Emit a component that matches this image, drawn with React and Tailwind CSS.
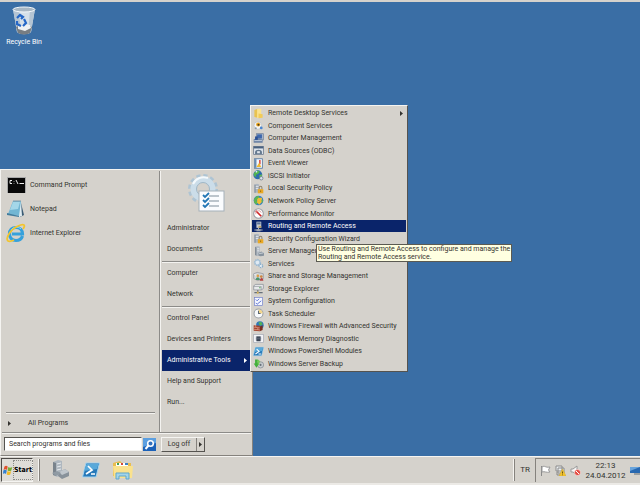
import { useState } from 'react';

function FolderIcon() {
  return (
    <svg viewBox="0 0 16 16" className="size-[11px]">
      <path d="M2 3l5-2v13l-5-1z" fill="#e9c34f" />
      <path d="M6 1h6v12l-6 2z" fill="#fbe38f" />
      <path d="M8 8l6 1v5l-6 1z" fill="#f1cb58" />
    </svg>
  );
}

function ComponentIcon() {
  return (
    <svg viewBox="0 0 16 16" className="size-[11px]">
      <circle cx="7" cy="8" r="5.5" fill="#f4f5f7" stroke="#b9c0c8" />
      <circle cx="7.5" cy="6.5" r="3" fill="#f0aa22" />
      <circle cx="8" cy="7" r="1.5" fill="#4b3a1c" />
      <circle cx="12" cy="11.5" r="2" fill="#4b86cf" />
      <circle cx="4" cy="12" r="1.5" fill="#8a98a6" />
    </svg>
  );
}

function ComputerIcon() {
  return (
    <svg viewBox="0 0 16 16" className="size-[11px]">
      <rect x="5" y="1" width="10" height="9" fill="#a9b8cc" stroke="#6e7f96" />
      <rect x="6" y="2" width="7" height="6" fill="#3e68ad" />
      <path d="M1 9l8-2 5 3v4H1z" fill="#6d84a6" />
      <path d="M3 5h4v5H3z" fill="#294f94" />
      <path d="M2 11h11" stroke="#dfe6ef" />
    </svg>
  );
}

function OdbcIcon() {
  return (
    <svg viewBox="0 0 16 16" className="size-[11px]">
      <rect x="1" y="2" width="14" height="12" fill="#dfe5ec" stroke="#5b6b80" />
      <path d="M1 2h14v3H1z" fill="#48617f" />
      <path d="M3 10c0-4 10-4 10 0v3H3z" fill="#64798f" />
      <path d="M6 9h4v3H6z" fill="#dfe5ec" />
    </svg>
  );
}

function EventIcon() {
  return (
    <svg viewBox="0 0 16 16" className="size-[11px]">
      <rect x="2" y="1" width="12" height="14" fill="#8db2d8" stroke="#5f7c9b" />
      <path d="M5 2h8v12H5z" fill="#f3f6fa" />
      <path d="M10 3v6" stroke="#d3342b" strokeWidth="2" />
      <path d="M5 13l4-6 3 6z" fill="#f0b72e" />
      <path d="M4 2v12" stroke="#45688d" />
    </svg>
  );
}

function GlobeIcon() {
  return (
    <svg viewBox="0 0 16 16" className="size-[11px]">
      <circle cx="7" cy="7" r="6.5" fill="#2c6cae" />
      <path d="M3 3c3-3 6-2 7 0L7 6 4 7l1 3-3-1C0 6 2 4 3 3z" fill="#52b54e" />
      <path d="M9 8l4-2v3l-3 3z" fill="#62bd55" />
      <path d="M4 3l2-1" stroke="#def4fb" strokeWidth="2" />
      <circle cx="12" cy="12" r="2.5" fill="#dbe3ed" stroke="#5d6f83" />
    </svg>
  );
}

function PolicyGlobeIcon() {
  return (
    <svg viewBox="0 0 16 16" className="size-[11px]">
      <circle cx="8" cy="8" r="7" fill="#3382c4" />
      <path d="M3 4c2-3 5-3 6-2L8 6 5 8l2 3-2 3C0 11 1 6 3 4z" fill="#5db552" />
      <path d="M8 4h5v6l-4 4-3-3V6z" fill="#f0bb35" />
      <path d="M12 7l3 1-2 4z" fill="#61b457" />
    </svg>
  );
}

function ServerLockIcon() {
  return (
    <svg viewBox="0 0 16 16" className="size-[11px]">
      <path d="M2 2l4-1 3 1v12H2z" fill="#adb6c0" />
      <path d="M2 2l2 1v11H2z" fill="#8d98a4" />
      <path d="M4 5h4M4 8h4" stroke="#f2f4f6" />
      <path d="M9 9V7c0-3 4-3 4 0v2" fill="none" stroke="#8d8470" strokeWidth="1.5" />
      <rect x="7" y="9" width="8" height="6" fill="#e9a824" />
      <path d="M11 11v2" stroke="#9d7219" strokeWidth="1.5" />
    </svg>
  );
}

function ServerIcon() {
  return (
    <svg viewBox="0 0 16 16" className="size-[11px]">
      <path d="M3 1l4-1 3 1v12l-4 2-3-2z" fill="#b3bbc4" />
      <path d="M3 1l2 1v12l-2-1z" fill="#7f8993" />
      <path d="M6 4h3M6 7h3" stroke="#f7f9fa" />
      <path d="M8 10l4-2 4 2v4l-5 1-3-1z" fill="#88939e" />
      <path d="M9 11l6-1" stroke="#e8ecf0" />
    </svg>
  );
}

function PerformanceIcon() {
  return (
    <svg viewBox="0 0 16 16" className="size-[11px]">
      <circle cx="8" cy="8" r="7" fill="#fff" stroke="#989ca2" strokeWidth="1.5" />
      <path d="M4 4l8 8" stroke="#cf2a2a" strokeWidth="2.5" />
      <path d="M4 9a4 4 0 0 1 8-2" fill="none" stroke="#cf8e8e" />
    </svg>
  );
}

function RoutingIcon() {
  return (
    <svg viewBox="0 0 16 16" className="size-[11px]">
      <path d="M5 1h7v9H5z" fill="#c7ccd4" />
      <path d="M6 2h5v3H6z" fill="#5b7297" />
      <path d="M8 7h4v3H8z" fill="#b9a06a" />
      <path d="M2 13h12M8 10v4" stroke="#aab0ba" strokeWidth="1.5" />
      <path d="M5 12h6v3H5z" fill="#9ba5b2" />
    </svg>
  );
}

function GearIcon() {
  return (
    <svg viewBox="0 0 16 16" className="size-[11px]">
      <circle cx="6.5" cy="6.5" r="4" fill="#dfeaf3" stroke="#9cb9d1" strokeWidth="2.5" strokeDasharray="2 1" />
      <circle cx="6.5" cy="6.5" r="3.5" fill="none" stroke="#a7c4da" />
      <circle cx="11.5" cy="11.5" r="2.5" fill="#e4edf5" stroke="#8aaeca" strokeWidth="2" strokeDasharray="2 1" />
    </svg>
  );
}

function ShareIcon() {
  return (
    <svg viewBox="0 0 16 16" className="size-[11px]">
      <path d="M1 4l5-2 9 2v7l-8 3-6-3z" fill="#d2d5d7" stroke="#8d9297" />
      <path d="M2 5l5 2v6" fill="none" stroke="#fff" />
      <circle cx="7" cy="7" r="2" fill="#dc9d45" />
      <circle cx="12" cy="8" r="2" fill="#cc8640" />
      <path d="M4 13c0-5 6-5 6 0z" fill="#4d956d" />
      <path d="M10 14c0-5 5-5 5 0z" fill="#b44141" />
    </svg>
  );
}

function StorageIcon() {
  return (
    <svg viewBox="0 0 16 16" className="size-[11px]">
      <path d="M1 4l3-2h11v6l-3 2H1z" fill="#e7e9eb" stroke="#858b91" />
      <path d="M1 5h11v5" fill="none" stroke="#8f969c" />
      <path d="M7 10v4M2 14h12" stroke="#666f78" strokeWidth="1.5" />
      <path d="M9 7h2" stroke="#43a343" strokeWidth="1.5" />
      <circle cx="7" cy="14" r="1.5" fill="#d8b355" />
    </svg>
  );
}

function ConfigIcon() {
  return (
    <svg viewBox="0 0 16 16" className="size-[11px]">
      <rect x="2" y="2" width="12" height="12" fill="#f2f5ff" stroke="#7280c8" strokeWidth="1" />
      <path d="M4 5l2 2 3-3M4 10l2 2 6-5" fill="none" stroke="#4a62cc" strokeWidth="1.2" />
    </svg>
  );
}

function ClockIcon() {
  return (
    <svg viewBox="0 0 16 16" className="size-[11px]">
      <circle cx="8" cy="8" r="6.5" fill="#f8fafc" stroke="#999fa6" strokeWidth="1.5" />
      <path d="M8 8V2a6 6 0 0 1 6 6z" fill="#f3d68b" />
      <path d="M8 4v4h3" fill="none" stroke="#5c6875" strokeWidth="1.5" />
    </svg>
  );
}

function FirewallIcon() {
  return (
    <svg viewBox="0 0 16 16" className="size-[11px]">
      <circle cx="10" cy="6" r="5.5" fill="#2f77b8" />
      <path d="M8 2l4-1 2 4-4 2z" fill="#54b257" />
      <path d="M1 6l9 1v8l-9-1z" fill="#a3432c" />
      <path d="M1 9l9 1M1 12l9 1M4 6v3M7 10v3" stroke="#e0a290" />
      <path d="M10 8l4-2v7l-4 2z" fill="#7c2d1e" />
    </svg>
  );
}

function MemoryIcon() {
  return (
    <svg viewBox="0 0 16 16" className="size-[11px]">
      <rect x="1" y="2" width="14" height="12" fill="#f4f5f8" stroke="#a3a8b2" />
      <path d="M5 5h6v7H5z" fill="#26303f" />
      <path d="M4 6h8M4 8h8M4 10h8" stroke="#6a7588" />
    </svg>
  );
}

function PowerShellIcon({ className = 'size-[11px]' }) {
  return (
    <svg viewBox="0 0 18 16" className={className}>
      <path d="M4 1h13.500l-3.500 14H.5z" fill="#2779b9" stroke="#a5d4ef" />
      <path d="M4.500 2h12l-1.500 5-13 2z" fill="#58a9da" />
      <path d="M6 4l4 4-6 4M9 12h4" fill="none" stroke="#fff" strokeWidth="1.700" />
    </svg>
  );
}

function BackupIcon() {
  return (
    <svg viewBox="0 0 16 16" className="size-[11px]">
      <circle cx="11" cy="10" r="4.500" fill="#c7ccd0" stroke="#7e868e" />
      <circle cx="11" cy="10" r="1.500" fill="#68727a" />
      <path d="M3 2h4v6h2l-4 6-4-6h2z" fill="#43af3d" />
      <path d="M8 2l3 4H9v4H7V6H5z" fill="#75cb59" />
    </svg>
  );
}

const adminTools = [
  { label: 'Remote Desktop Services', icon: FolderIcon, hasMenu: true },
  { label: 'Component Services', icon: ComponentIcon },
  { label: 'Computer Management', icon: ComputerIcon },
  { label: 'Data Sources (ODBC)', icon: OdbcIcon },
  { label: 'Event Viewer', icon: EventIcon },
  { label: 'iSCSI Initiator', icon: GlobeIcon },
  { label: 'Local Security Policy', icon: ServerLockIcon },
  { label: 'Network Policy Server', icon: PolicyGlobeIcon },
  { label: 'Performance Monitor', icon: PerformanceIcon },
  { label: 'Routing and Remote Access', icon: RoutingIcon },
  { label: 'Security Configuration Wizard', icon: ServerLockIcon },
  { label: 'Server Manager', icon: ServerIcon },
  { label: 'Services', icon: GearIcon },
  { label: 'Share and Storage Management', icon: ShareIcon },
  { label: 'Storage Explorer', icon: StorageIcon },
  { label: 'System Configuration', icon: ConfigIcon },
  { label: 'Task Scheduler', icon: ClockIcon },
  { label: 'Windows Firewall with Advanced Security', icon: FirewallIcon },
  { label: 'Windows Memory Diagnostic', icon: MemoryIcon },
  { label: 'Windows PowerShell Modules', icon: PowerShellIcon },
  { label: 'Windows Server Backup', icon: BackupIcon },
];

const places = [
  ['Administrator', 'Documents'],
  ['Computer', 'Network'],
  ['Control Panel', 'Devices and Printers', 'Administrative Tools', 'Help and Support', 'Run...'],
];

function Arrow() {
  return (
    <svg viewBox="0 0 3 5" className="h-[5px] w-[3px] shrink-0">
      <path d="M0 0l3 2.500L0 5z" fill="currentColor" />
    </svg>
  );
}

function Separator({ className = '' }) {
  return <div className={`h-[2px] shrink-0 border-t border-b border-t-[#8c8b88] border-b-[#f4f3f0] ${className}`} />;
}

function RecycleBin() {
  return (
    <button className="ml-1 mt-1 flex w-10 flex-col items-center text-white">
      <svg viewBox="0 0 24 30" className="h-[30px] w-6">
        <path d="M1 3l4 23c3 3 11 3 14 0l4-23z" fill="#d5e0e9" />
        <path d="M1 3l4 23 4 2L7 4zM23 3l-4 23-3 2 2-24z" fill="#b4c4d3" />
        <path d="M4 21l2 6c4 2 8 2 12 0l2-6c-4-2-11-2-16 0z" fill="#777d82" />
        <path d="M6 20l5-2 7 1 1 3-6 3-7-2z" fill="#eef1f3" />
        <ellipse cx="12" cy="3.500" rx="11" ry="2.500" fill="#a8b7c4" stroke="#f4f8fb" />
        <path d="M5 12l3-3 3 2-2 2M12 13l2 4-3 3M9 20l-4-2v-3" fill="none" stroke="#2567c7" strokeWidth="2.200" />
      </svg>
      <span className="mt-px leading-[10px] whitespace-nowrap">Recycle Bin</span>
    </button>
  );
}

function CommandIcon() {
  return (
    <svg viewBox="0 0 19 16" className="h-4 w-[19px]">
      <rect width="19" height="16" fill="#080808" />
      <path d="M0 .5h19M.5 0v16M18.500 0v16" stroke="#a9a9a9" />
      <path d="M5 3.500H3v3h2M7 4v.5M7 6v.5M9 3l2 4M12.500 6.500H17" fill="none" stroke="#eee" />
    </svg>
  );
}

function NotepadIcon() {
  return (
    <svg viewBox="0 0 20 18" className="h-[18px] w-5">
      <path d="M15 3l3 12-4 2z" fill="#3b5c74" />
      <path d="M7 1l8 1 1 14-3 1z" fill="#dfebf0" />
      <path d="M7 1h8l-2 15-11-2z" fill="#72b6d3" />
      <path d="M7 2h7l-2 7-8 1z" fill="#a4d7e9" />
      <path d="M1 13l12 3v1L1 15z" fill="#427c9c" />
      <path d="M7 1h8" stroke="#7f9aaa" />
    </svg>
  );
}

function ExplorerIcon() {
  return (
    <svg viewBox="0 0 20 20" className="size-5">
      <path d="M16.500 13c-1 3-3 4.500-6.500 4.500-4 0-6.500-3-6.500-6.700S6 4.500 10 4.500s6.500 3 6.500 6.500H6" fill="none" stroke="#36a1dc" strokeWidth="3.200" />
      <path d="M5 7c2-3 7-4 10-1" fill="none" stroke="#93dbf7" />
      <path d="M2 18C-1 15 5 6 12 3c6-3 8-1 5 3M2 18c2 1 4 0 6-1" fill="none" stroke="#f3c52c" strokeWidth="1.800" />
    </svg>
  );
}

function ChecklistGear() {
  return (
    <svg viewBox="0 0 38 39" className="h-[39px] w-[38px]">
      <circle cx="16" cy="16" r="13" fill="none" stroke="#aec4d3" strokeWidth="4" strokeDasharray="4 2.800" />
      <circle cx="16" cy="16" r="9.500" fill="none" stroke="#cbdde9" strokeWidth="6" />
      <circle cx="16" cy="16" r="6.500" fill="none" stroke="#9fb7c7" />
      <path d="M6 11c3-6 9-8 15-6" fill="none" stroke="#f4f9fc" strokeWidth="2" />
      <rect x="12" y="18" width="25" height="20" fill="#fafcfe" stroke="#a6b1ba" />
      <path d="M22 23h10M22 28h10M22 33h10" stroke="#7f8e99" strokeWidth="1.200" />
      <path d="M16 22l2 2 4-4M16 27l2 2 4-4M16 32l2 2 4-4" fill="none" stroke="#2377b5" strokeWidth="1.800" />
    </svg>
  );
}

function AdminToolsMenu({ selected, onSelect }) {
  return (
    <ul className="absolute bottom-[84px] left-[250px] z-10 flex h-[267px] w-[158px] flex-col border border-t-[#f5f4f1] border-r-[#55534f] border-b-[#55534f] border-l-[#f5f4f1] bg-[#d5d2cc] p-px">
      {adminTools.map(({ label, icon: Icon, hasMenu }) => (
        <li key={label} className="relative flex min-h-0 flex-1">
          <button
            onClick={() => onSelect(label)}
            className={`flex flex-1 items-center pr-[3px] pl-px text-left leading-[10px] whitespace-nowrap ${
              selected === label ? 'bg-[#0a246a] text-white' : ''
            }`}
          >
            <Icon />
            <span className="ml-1 flex-1">{label}</span>
            {hasMenu && <Arrow />}
          </button>
          {selected === label && (
            <div
              role="tooltip"
              className="absolute top-6 left-16 z-20 border border-[#5b5a52] bg-[#ffffe1] px-px leading-[8px] whitespace-nowrap text-[#33322d]"
            >
              Use Routing and Remote Access to configure and manage the
              <br />
              Routing and Remote Access service.
            </div>
          )}
        </li>
      ))}
    </ul>
  );
}

function StartMenu() {
  const [search, setSearch] = useState('');

  return (
    <div className="absolute bottom-0 left-0 flex h-[287px] w-[253px] flex-col border border-t-[#f5f4f1] border-r-[#85827d] border-b-[#85827d] border-l-[#f5f4f1] bg-[#d5d2cc] p-px">
      <div className="flex min-h-0 flex-1">
        <div className="flex w-[157px] flex-col px-1 pt-[2px]">
          <button className="flex h-6 items-center gap-1">
            <span className="flex w-5 justify-center"><CommandIcon /></span>
            Command Prompt
          </button>
          <button className="flex h-6 items-center gap-1">
            <NotepadIcon />
            Notepad
          </button>
          <button className="flex h-6 items-center gap-1">
            <ExplorerIcon />
            Internet Explorer
          </button>
          <Separator className="mt-auto" />
          <button className="flex h-[18px] items-center pl-[2px]">
            <Arrow />
            <span className="ml-[17px]">All Programs</span>
          </button>
        </div>
        <div className="w-[2px] border-r border-l border-r-[#f4f3f0] border-l-[#8c8b88]" />
        <div className="flex flex-1 flex-col px-px">
          <div className="flex h-[47px] shrink-0 justify-center pt-[2px]">
            <ChecklistGear />
          </div>
          {places.map((group, i) => (
            <div key={group[0]}>
              {i > 0 && <Separator className="mt-px" />}
              {group.map((name) => (
                <button
                  key={name}
                  className={`flex h-[21px] w-full items-center justify-between pr-[3px] pl-[5px] ${
                    name === 'Administrative Tools' ? 'bg-[#0a246a] text-white' : ''
                  }`}
                >
                  {name}
                  {name === 'Administrative Tools' && <Arrow />}
                </button>
              ))}
            </div>
          ))}
        </div>
      </div>
      <Separator />
      <div className="flex h-[20px] shrink-0 items-center pl-[2px]">
        <input
          type="text"
          aria-label="Search programs and files"
          placeholder="Search programs and files"
          value={search}
          onChange={(e) => setSearch(e.target.value)}
          className="h-[14px] w-[138px] border border-t-[#55534f] border-r-[#f4f3f0] border-b-[#f4f3f0] border-l-[#55534f] bg-white px-1 placeholder:text-[#33322f]"
        />
        <button aria-label="Search" className="ml-px">
          <svg viewBox="0 0 13 13" className="size-[13px]">
            <rect width="13" height="13" fill="#1b61b8" />
            <path d="M0 0h13v5L0 9z" fill="#5c9fe0" />
            <circle cx="7.500" cy="5.500" r="2.800" fill="#3270bd" stroke="#fff" strokeWidth="1.500" />
            <path d="M5.500 7.500L2.500 11" stroke="#fff" strokeWidth="2" />
          </svg>
        </button>
        <div className="ml-[5px] flex h-[15px] border border-t-[#f5f4f1] border-r-[#55534f] border-b-[#55534f] border-l-[#f5f4f1]">
          <button className="w-[34px]">Log off</button>
          <button aria-label="More" className="flex w-2 items-center justify-center border-l border-l-[#85827d]">
            <Arrow />
          </button>
        </div>
      </div>
    </div>
  );
}

function Taskbar() {
  return (
    <footer className="flex h-[29px] shrink-0 items-center border-t border-t-[#f5f4f1] border-b-2 border-b-[#eceae6] bg-[#d5d2cc]">
      <button className="ml-px flex h-6 w-8 items-center border border-t-[#4d4b48] border-r-[#f5f4f1] border-b-[#f5f4f1] border-l-[#4d4b48] bg-[#dfddd8]">
        <svg viewBox="0 0 10 10" className="ml-px size-[10px] shrink-0">
          <path d="M1.500 1.500c1-1 2-1 3.200 0L4 5C3 4 2 4 .5 5z" fill="#e1512c" />
          <path d="M5.300 2c1.200 1 2.500 1 4 0l-1 3.500c-1 .8-2.500.8-3.700 0z" fill="#78ae34" />
          <path d="M.3 5.500c1-1 2.500-1 3.500 0L3 9c-1-1-2-1-3 0z" fill="#3480d0" />
          <path d="M4.500 6c1 1 2.500 1 3.700 0l-1 3.500c-1 .8-2.500.8-3.500 0z" fill="#f3ba24" />
        </svg>
        <span className="flex h-5 items-center border border-dotted border-[#8c8b88] font-['DejaVu_Sans_Condensed','DejaVu_Sans',sans-serif] font-bold text-black">
          Start
        </span>
      </button>
      <div className="ml-[5px] h-[22px] w-[2px] border-r border-l border-r-[#85827d] border-l-[#f5f4f1]" />
      <div className="flex items-center gap-3 pl-[10px]">
        <button aria-label="Server Manager" className="flex w-5 justify-center">
          <svg viewBox="0 0 20 20" className="size-5">
            <path d="M3 2l5-2 4 1v13l-5 3-4-2z" fill="#aeb7bf" />
            <path d="M3 2l3 1v13l-3-1z" fill="#79838c" />
            <path d="M7 4l4-1M7 7l4-1M7 10l4-1" stroke="#e7ebee" />
            <path d="M9 12l6-3 4 3v4l-7 3-4-3z" fill="#87919a" />
            <path d="M9 12l6-3 4 3-7 3z" fill="#bfc6cc" />
            <path d="M2 13l5-2 4 2-5 3z" fill="#8f9aa3" />
          </svg>
        </button>
        <button aria-label="Windows PowerShell"><PowerShellIcon className="h-4 w-[18px]" /></button>
        <button aria-label="Windows Explorer">
          <svg viewBox="0 0 22 20" className="h-5 w-[22px]">
            <path d="M1 3l7-2 2 2h9v13H1z" fill="#e9bd50" />
            <path d="M4 3h12v3H4z" fill="#fff" />
            <path d="M5 4h2" stroke="#3f9d58" strokeWidth="2" />
            <path d="M9 4h2" stroke="#d34a38" strokeWidth="2" />
            <path d="M13 4h3" stroke="#3d81c4" strokeWidth="2" />
            <path d="M1 6h20l-1 12H2z" fill="#fae28e" />
            <path d="M4 19v-6h13v6h-3v-3H7v3z" fill="#a2d4ea" stroke="#5ea7cc" />
          </svg>
        </button>
      </div>
      <div className="ml-auto h-[22px] w-[2px] border-r border-l border-r-[#85827d] border-l-[#f5f4f1]" />
      <button className="px-[5px] text-[8px]">TR</button>
      <div className="flex h-6 w-[105px] items-center border-t border-l border-t-[#85827d] border-l-[#85827d] bg-[#d5d2cc] pl-1">
        <svg viewBox="0 0 11 12" className="h-3 w-[11px] shrink-0">
          <path d="M1.500 1v10" stroke="#8a8a8a" />
          <path d="M2 2c3-2 3 1 8 0L8.500 5 10 7c-4 1-5-1-8 0z" fill="#fff" stroke="#999" />
        </svg>
        <svg viewBox="0 0 11 11" className="ml-1 size-[11px] shrink-0">
          <path d="M1 1h6v5H1zM3 3h6v5H3z" fill="#edf0f2" stroke="#8a8a8a" />
          <path d="M2 7v3h3" fill="none" stroke="#8a8a8a" />
          <path d="M7.500 4L11 11H4z" fill="#f3c42f" stroke="#d1a829" strokeWidth=".5" />
          <path d="M7.500 6.500v2M7.500 9.500v.7" stroke="#6b5310" />
        </svg>
        <svg viewBox="0 0 11 11" className="ml-1 size-[11px] shrink-0">
          <path d="M1 4h2l4-3v9L3 7H1z" fill="#f6f6f6" stroke="#999" />
          <circle cx="7.500" cy="7.500" r="3" fill="#e44c42" stroke="#fff" strokeWidth=".5" />
          <path d="M6 6l3 3" stroke="#fff" />
        </svg>
        <div className="flex-1 text-center text-[8px] leading-[10px]">
          22:13
          <br />
          24.04.2012
        </div>
        <button aria-label="Show desktop">
          <svg viewBox="0 0 10 10" className="size-[10px]">
            <path d="M0 1h10v6H0z" fill="#2868b0" />
            <path d="M0 1h10L0 5z" fill="#69a4dc" />
            <path d="M4 8h6" stroke="#5f6a75" />
          </svg>
        </button>
      </div>
    </footer>
  );
}

export default function App() {
  const [selected, setSelected] = useState('Routing and Remote Access');

  return (
    <div className="flex h-screen flex-col overflow-hidden bg-[#3a6ea5] font-[Roboto,'Liberation_Sans',sans-serif] text-[7px] text-[#33322f]">
      <main className="relative flex-1 border-t-2 border-t-[#d5d2cc]">
        <RecycleBin />
        <StartMenu />
        <AdminToolsMenu selected={selected} onSelect={setSelected} />
      </main>
      <Taskbar />
    </div>
  );
}
